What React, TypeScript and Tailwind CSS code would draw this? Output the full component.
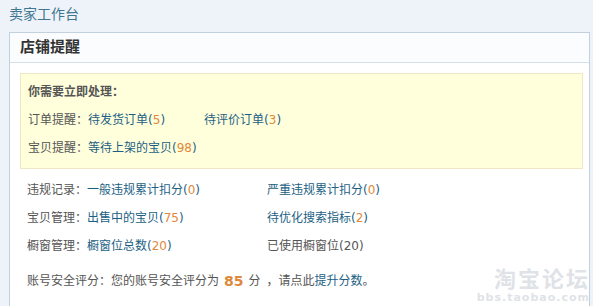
const FONT = "font-['DejaVu_Sans','Noto_Sans_CJK_SC',sans-serif]";

function Link({ text, num }: { text: string; num: number }) {
  return (
    <span className="text-[#1d5f84]">
      {text}(<span className="text-[#e0883a]">{num}</span>)
    </span>
  );
}

function Row({ label, children }: { label: string; children: React.ReactNode }) {
  return (
    <div className="flex h-[28px] items-center">
      <span className="text-[#555]">{label}：</span>
      {children}
    </div>
  );
}

export default function App() {
  return (
    <div className={`relative w-[593px] h-[306px] overflow-hidden bg-[#eef3f9] text-[12px] ${FONT}`}>
      <div className="h-[32px] pl-[9px] pt-[4px] text-[14px] text-[#3f7793]">卖家工作台</div>

      <div className="ml-[9px] w-[581px] h-[300px] border border-[#c3d1de] bg-white">
        <div className="flex h-[30px] items-center border-b border-[#d6e0ea] bg-[#fbfcfe] pl-[10px] text-[15px] font-bold text-[#333]">
          店铺提醒
        </div>

        <div className="pl-[10px] pt-[10px]">
          {/* urgent box */}
          <div className="w-[563px] h-[96px] border border-[#efe7c4] bg-[#ffffdc] pl-[7px] pt-[4px]">
            <div className="flex h-[28px] items-center font-bold text-[#555]">你需要立即处理：</div>
            <Row label="订单提醒">
              <span className="w-[116px]">
                <Link text="待发货订单" num={5} />
              </span>
              <Link text="待评价订单" num={3} />
            </Row>
            <Row label="宝贝提醒">
              <Link text="等待上架的宝贝" num={98} />
            </Row>
          </div>

          <div className="pl-[7px] pt-[6px]">
            <div className="flex h-[29px] items-center">
              <span className="w-[240px]">
                <span className="text-[#555]">违规记录：</span>
                <Link text="一般违规累计扣分" num={0} />
              </span>
              <Link text="严重违规累计扣分" num={0} />
            </div>
            <div className="flex h-[28px] items-center">
              <span className="w-[240px]">
                <span className="text-[#555]">宝贝管理：</span>
                <Link text="出售中的宝贝" num={75} />
              </span>
              <Link text="待优化搜索指标" num={2} />
            </div>
            <div className="flex h-[28px] items-center">
              <span className="w-[240px]">
                <span className="text-[#555]">橱窗管理：</span>
                <Link text="橱窗位总数" num={20} />
              </span>
              <span className="text-[#555]">已使用橱窗位(20)</span>
            </div>
            <div className="mt-[7px] flex h-[28px] items-center text-[#555]">
              <span>账号安全评分：</span>
              <span>您的账号安全评分为</span>
              <span className="mx-[5px] text-[14px] font-bold text-[#e0883a]">85</span>
              <span>分</span>
              <span className="ml-[6px]">，请点此</span>
              <span className="text-[#1d5f84]">提升分数</span>
              <span>。</span>
            </div>
          </div>
        </div>
      </div>

      {/* watermark */}
      <div className="absolute right-[3px] bottom-[3px] flex flex-col items-end leading-none text-[#dfe3e7]">
        <span className="text-[22px] font-bold tracking-[2px]">淘宝论坛</span>
        <span className="mt-[1px] text-[11px] font-bold tracking-[1px]">bbs.taobao.com</span>
      </div>
    </div>
  );
}
